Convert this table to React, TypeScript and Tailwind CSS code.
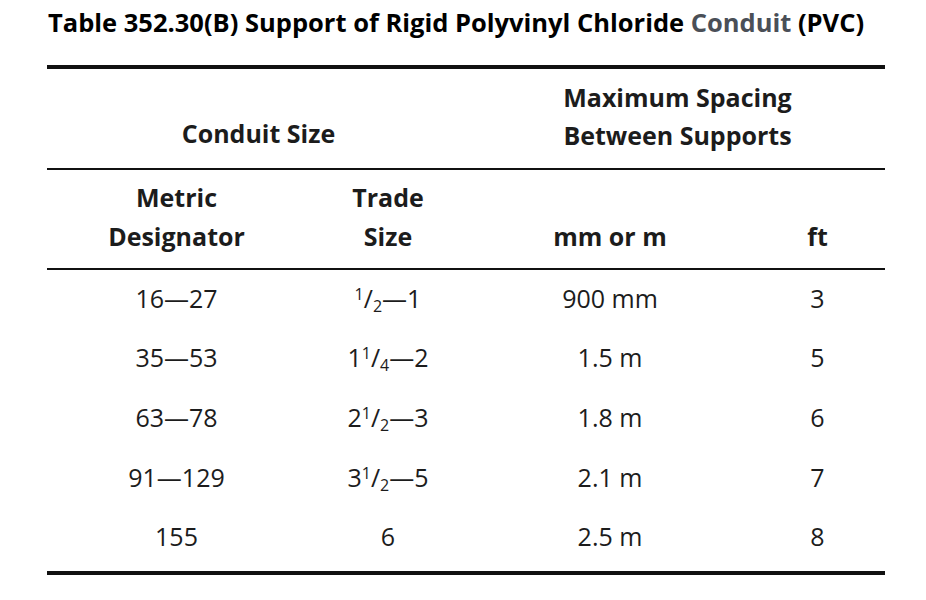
import React from 'react';

const rows = [
  { metric: '16—27', trade: { whole: '', num: '1', den: '2', rest: '—1' }, spacing: '900 mm', ft: '3' },
  { metric: '35—53', trade: { whole: '1', num: '1', den: '4', rest: '—2' }, spacing: '1.5 m', ft: '5' },
  { metric: '63—78', trade: { whole: '2', num: '1', den: '2', rest: '—3' }, spacing: '1.8 m', ft: '6' },
  { metric: '91—129', trade: { whole: '3', num: '1', den: '2', rest: '—5' }, spacing: '2.1 m', ft: '7' },
  { metric: '155', trade: { whole: '6', num: '', den: '', rest: '' }, spacing: '2.5 m', ft: '8' },
];

type Trade = { whole: string; num: string; den: string; rest: string };

const TradeSize = ({ t }: { t: Trade }) => (
  <span>
    {t.whole}
    {t.num && (
      <>
        <sup className="text-[16px]">{t.num}</sup>/<sub className="text-[16px]">{t.den}</sub>
      </>
    )}
    {t.rest}
  </span>
);

export default function App() {
  return (
    <div className="w-[926px] h-[600px] bg-white text-[#1c1c1c] font-['Open_Sans',sans-serif]">
      <div className="pl-[48px] pt-[6px] h-[65px]">
        <h1 className="text-[25.5px] font-bold leading-[32px] text-black">
          Table 352.30(B) Support of Rigid Polyvinyl Chloride <span className="text-[#4a4f57]">Conduit</span> (PVC)
        </h1>
      </div>
      <div className="ml-[47px] w-[838px]">
        <table className="w-full border-collapse table-fixed">
          <colgroup>
            <col className="w-[259px]" />
            <col className="w-[164px]" />
            <col className="w-[280px]" />
            <col />
          </colgroup>
          <thead>
            <tr className="border-t-[4px] border-b-2 border-[#111]">
              <th colSpan={2} className="h-[102px] align-bottom pb-[16px] text-[25px] font-bold leading-[38px]">
                Conduit Size
              </th>
              <th colSpan={2} className="h-[102px] align-bottom pb-[14px] text-[25px] font-bold leading-[38px]">
                Maximum Spacing
                <br />
                Between Supports
              </th>
            </tr>
            <tr className="border-b-2 border-[#111]">
              <th className="h-[100px] align-bottom pb-[12px] text-[25px] font-bold leading-[39px]">
                Metric
                <br />
                Designator
              </th>
              <th className="align-bottom pb-[12px] text-[25px] font-bold leading-[39px]">
                Trade
                <br />
                Size
              </th>
              <th className="align-bottom pb-[12px] text-[25px] font-bold leading-[39px]">mm or m</th>
              <th className="align-bottom pb-[12px] text-[25px] font-bold leading-[39px]">ft</th>
            </tr>
          </thead>
          <tbody className="border-b-[4px] border-[#111]">
            {rows.map((r, i) => {
              const last = i === rows.length - 1;
              return (
                <tr key={i} className={last ? 'h-[64px]' : 'h-[60px]'}>
                  <td className={last ? 'text-center text-[25px] leading-[30px] pb-[8px]' : 'text-center text-[25px] leading-[30px] pb-[4px]'}>{r.metric}</td>
                  <td className={last ? 'text-center text-[25px] leading-[30px] pb-[8px]' : 'text-center text-[25px] leading-[30px] pb-[4px]'}>
                    <TradeSize t={r.trade} />
                  </td>
                  <td className={last ? 'text-center text-[25px] leading-[30px] pb-[8px]' : 'text-center text-[25px] leading-[30px] pb-[4px]'}>{r.spacing}</td>
                  <td className={last ? 'text-center text-[25px] leading-[30px] pb-[8px]' : 'text-center text-[25px] leading-[30px] pb-[4px]'}>{r.ft}</td>
                </tr>
              );
            })}
          </tbody>
        </table>
      </div>
    </div>
  );
}
